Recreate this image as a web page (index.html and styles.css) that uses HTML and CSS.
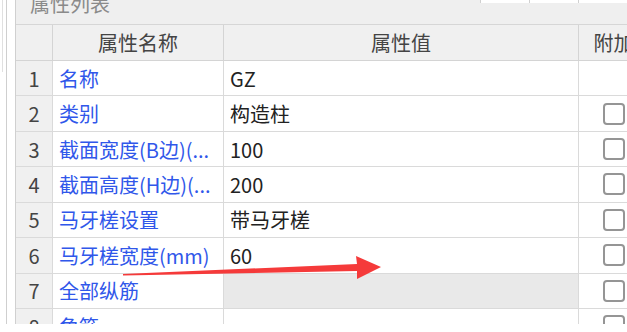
FILE: index.html
```html
<!DOCTYPE html>
<html lang="zh-CN">
<head>
    <meta charset="UTF-8">
    <title>属性列表</title>
    <link rel="stylesheet" href="styles.css">
</head>
<body>
    <div class="wrap">
        <div class="side">
            <div class="side-line short"></div>
            <div class="side-line"></div>
        </div>

        <div class="panel">
            <div class="title">
                <span>属性列表</span>
                <div class="top-strip">
                    <div></div><div></div><div></div>
                </div>
            </div>

            <div class="grid">
                <div class="cell head"></div>
                <div class="cell head center">属性名称</div>
                <div class="cell head center">属性值</div>
                <div class="cell head center">附加</div>

                <div class="cell num">1</div>
                <div class="cell name">名称</div>
                <div class="cell value">GZ</div>
                <div class="cell check"></div>

                <div class="cell num">2</div>
                <div class="cell name">类别</div>
                <div class="cell value">构造柱</div>
                <div class="cell check"><span class="box"></span></div>

                <div class="cell num">3</div>
                <div class="cell name">截面宽度(B边)(...</div>
                <div class="cell value">100</div>
                <div class="cell check"><span class="box"></span></div>

                <div class="cell num">4</div>
                <div class="cell name">截面高度(H边)(...</div>
                <div class="cell value">200</div>
                <div class="cell check"><span class="box"></span></div>

                <div class="cell num">5</div>
                <div class="cell name">马牙槎设置</div>
                <div class="cell value">带马牙槎</div>
                <div class="cell check"><span class="box"></span></div>

                <div class="cell num">6</div>
                <div class="cell name">马牙槎宽度(mm)</div>
                <div class="cell value">60</div>
                <div class="cell check"><span class="box"></span></div>

                <div class="cell num">7</div>
                <div class="cell name">全部纵筋</div>
                <div class="cell value disabled"></div>
                <div class="cell check"><span class="box"></span></div>

                <div class="cell num">8</div>
                <div class="cell name">角筋</div>
                <div class="cell value"></div>
                <div class="cell check"><span class="box"></span></div>
            </div>
        </div>
    </div>

    <!-- red annotation arrow drawn over the table -->
    <svg class="arrow" width="627" height="332" viewBox="0 0 627 332">
        <polygon points="123,274 357,264 356,256 381,267 357,279 357,271 123,275.5" fill="#f53a3a"/>
    </svg>
</body>
</html>
```

FILE: styles.css
```css
body {
    margin: 0;
    padding: 0;
    width: 627px;
    height: 332px;
    overflow: hidden;
    background: #fff;
    font-family: "Noto Sans CJK SC", "Noto Sans", sans-serif;
    font-size: 20px;
    position: relative;
}
.wrap {
    display: flex;
    height: 324px;
    overflow: hidden;
}
.side {
    width: 15px;
    flex-shrink: 0;
    position: relative;
    display: flex;
}
.side-line {
    width: 1px;
    height: 100%;
    background: #cfcfcf;
    margin-left: 6px;
}
.side-line.short {
    height: 72px;
    margin-left: 2px;
    margin-right: -3px;
    background: #e0e0e0;
}
.panel {
    flex: 1;
    border-left: 1px solid #d0d0d0;
    overflow: hidden;
}
.title {
    height: 24px;
    background: #efefef;
    border-bottom: 1px solid #d6d6d6;
    display: flex;
    align-items: flex-start;
    overflow: hidden;
}
.title span {
    padding-left: 14px;
    line-height: 8px;
    color: #8a8a8a;
}
.top-strip {
    margin-left: auto;
    display: flex;
    height: 3px;
    background: #fff;
}
.top-strip div {
    width: 48px;
    border-left: 1px solid #d0d0d0;
}
.grid {
    display: grid;
    grid-template-columns: 37px 171px 355px 70px;
    grid-template-rows: 36px repeat(8, 35.43px);
    width: 633px;
}
.cell {
    box-sizing: border-box;
    border-right: 1px solid #dadada;
    border-bottom: 1px solid #dadada;
    display: flex;
    align-items: center;
    white-space: nowrap;
    overflow: hidden;
}
.head {
    background: #f0f0f0;
    color: #444;
    border-color: #d4d4d4;
}
.center {
    justify-content: center;
}
.num {
    background: #f0f0f0;
    color: #444;
    justify-content: center;
}
.name {
    color: #3057ea;
    padding-left: 6px;
}
.value {
    color: #222;
    padding-left: 6px;
}
.value.disabled {
    background: #e9e9e9;
}
.check {
    justify-content: center;
}
.box {
    width: 22px;
    height: 22px;
    box-sizing: border-box;
    border: 2px solid #959595;
    border-radius: 4px;
    background: #fff;
}
.arrow {
    position: absolute;
    left: 0;
    top: 0;
}
```
